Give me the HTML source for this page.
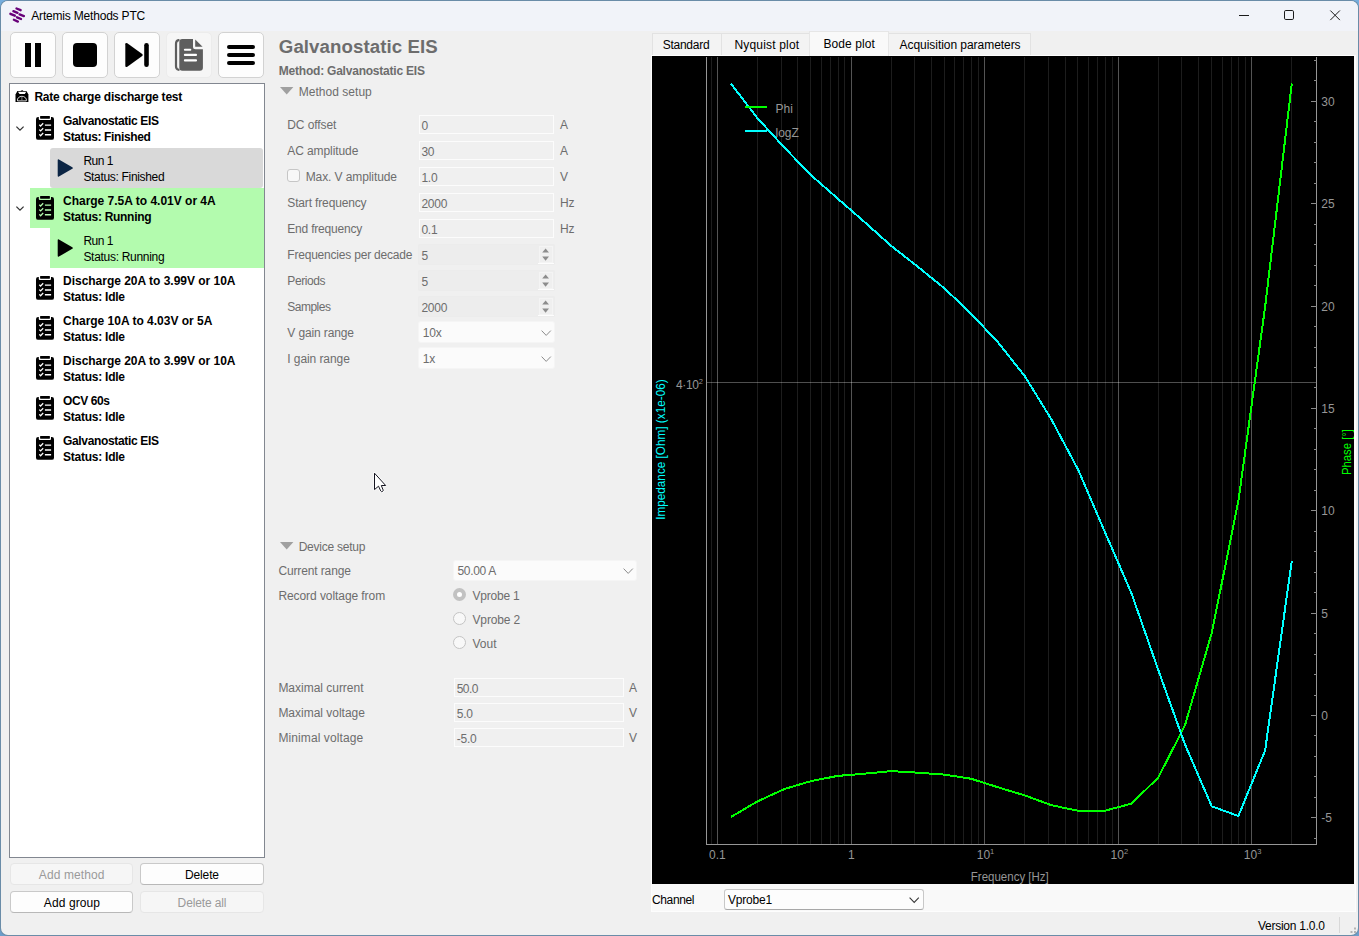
<!DOCTYPE html><html><head><meta charset="utf-8"><title>Artemis Methods PTC</title><style>

html,body{margin:0;padding:0}
body{width:1359px;height:936px;overflow:hidden;background:#6c9dca;position:relative;font-family:"Liberation Sans",sans-serif;font-size:12px;}
#bgt{position:absolute;left:0;top:0;width:1359px;height:40px;background:#76addd}
#win{position:absolute;left:1px;top:1px;width:1357px;height:934px;background:#f0f0f0;border-radius:7px;box-shadow:0 0 0 1px #6a8ca8;overflow:hidden}
#page{position:absolute;left:0;top:0;width:1359px;height:936px}
#tb{position:absolute;left:1px;top:1px;width:1357px;height:30px;background:#f1f3f9;border-radius:7px 7px 0 0}
.t{position:absolute;white-space:pre;color:#000}
.ab{position:absolute;box-sizing:border-box}
.ic,.plot{position:absolute;display:block}
.tbtn{position:absolute;box-sizing:border-box;width:46px;height:46px;top:32px;border:1px solid #d2d2d2;border-radius:5px;background:#fdfdfd}
.inp{position:absolute;box-sizing:border-box;border:1px solid #fcfcfc;background:#f0f0f0}
.spin{position:absolute;box-sizing:border-box;border:1px solid #ececec;background:#ededed;border-radius:2px}
.cmb{position:absolute;box-sizing:border-box;border:none;background:#fbfbfb;border-radius:2px;box-shadow:0 0 0 1px rgba(255,255,255,0.35)}
.btn{position:absolute;box-sizing:border-box;border:1px solid #c9c9c9;border-bottom-color:#b8b8b8;border-radius:4px;background:#fdfdfd}
.btn.dis{border-color:#e6e6e6;background:#f6f6f6}
.rad{position:absolute;box-sizing:border-box;width:13px;height:13px;border-radius:50%;border:1px solid #c4c4c4;background:#f8f8f8}
.tab{position:absolute;box-sizing:border-box;border:1px solid #e2e2e2;border-bottom:none;background:#f3f3f3;top:33px;height:22px}

</style></head><body><div id="bgt"></div><div id="win"></div><div id="page">
<div id="tb"></div>
<svg class="ic" width="30" height="30" viewBox="0 0 30 30" style="left:0px;top:0px"><g fill="none" stroke="#680079" stroke-width="2.35" stroke-linecap="round"><path d="M16.5,8.5l4.1,1.7"/><path d="M13.4,11.1l4.1,1.7"/><path d="M10.4,13.8l4.4,1.9"/><path d="M19.6,14.4l4.3,1.7"/><path d="M17,17.3l4,1.7"/><path d="M13.9,19.8l4,1.8"/></g></svg>
<svg class="ic" width="120" height="30" viewBox="0 0 120 30" style="left:1230px;top:1px"><g stroke="#1a1a1a" stroke-width="1" fill="none"><path d="M9,14.5h10"/><rect x="54.5" y="9.5" width="9" height="9" rx="1.3"/><path d="M100.3,9.5l9.6,9.6M109.9,9.5l-9.6,9.6"/></g></svg>
<div class="tbtn" style="left:10px"></div>
<div class="tbtn" style="left:62px"></div>
<div class="tbtn" style="left:114px"></div>
<div class="tbtn" style="left:166px;border-color:#ececec;background:#f6f6f6"></div>
<div class="tbtn" style="left:218px"></div>
<svg class="ic" width="260" height="46" viewBox="0 0 260 46" style="left:10px;top:32px"><rect x="15" y="11" width="6" height="24" fill="#000"/><rect x="25" y="11" width="6" height="24" fill="#000"/><rect x="63" y="11" width="24" height="24" rx="4" fill="#000"/><path d="M117.3,11.3L132.2,22q1.2,1 0,2L117.3,34.7q-2,1.2 -2,-1V12.3q0,-2.2 2,-1z" fill="#000"/><rect x="134.2" y="11" width="4.6" height="24" rx="2.3" fill="#000"/><path d="M168.6,8.1q-2.6,0.6 -2.6,3.6V34.2q0,3 2.6,3.6" stroke="#5e5e5e" stroke-width="2.2" fill="none" stroke-linecap="round"/><path d="M172.3,7.1h10.7v7.6q0,2.5 2.5,2.5h7.4v18.6q0,3 -3,3h-17.6q-3,0 -3,-3V10.1q0,-3 3,-3z" fill="#5e5e5e"/><path d="M185.2,7.4l7.4,7.3h-7.4z" fill="#5e5e5e"/><path d="M174.9,17.7h5.4M174.9,22.9h11.1M174.9,28.4h11.1" stroke="#fff" stroke-width="2.1" stroke-linecap="round" fill="none"/><path d="M219,15h24M219,23h24M219,31h24" stroke="#000" stroke-width="4" stroke-linecap="round" fill="none"/></svg>
<div class="ab" style="left:9px;top:83px;width:256px;height:775px;border:1px solid #828790;background:#fff"></div>
<div class="ab" style="left:50px;top:148px;width:213px;height:40px;background:#d9d9d9;border-radius:3px"></div>
<div class="ab" style="left:30px;top:188px;width:234px;height:40px;background:#b3fbae"></div>
<div class="ab" style="left:50px;top:228px;width:214px;height:40px;background:#b3fbae"></div>
<svg class="ic" width="14" height="13" viewBox="0 0 14 13" style="left:15px;top:90px"><path d="M2.4,1h9l2,3.4V12.1H0.5V4.4z" fill="#000"/><path d="M2.9,1.8h8.4l-1.5,2.2H4.6z" fill="#fff"/><path d="M2.5,10.9q-0.5,-1.9 1,-3.3q1.4,-1.3 3.4,-1.3q2,0 3.4,1.3q1.5,1.4 1,3.3z" fill="none" stroke="#f0f0f0" stroke-width="0.9"/><path d="M6.9,6.6v4" stroke="#999" stroke-width="0.8"/><path d="M5.9,0.6l1.1,0.5l1,-1" stroke="#000" stroke-width="0.8" fill="none"/></svg>
<svg class="ic" width="18" height="24" viewBox="0 0 18 24" style="left:36px;top:116px"><rect x="0" y="1.05" width="18" height="22.8" rx="2.2" fill="#000"/><path d="M2.8,0.9V3q0,1.1 1.1,1.1h10q1.1,0 1.1,-1.1V0.9z" fill="#fff"/><path d="M4.9,-0.1h8.2q0.8,0 0.8,0.8V1.9q0,0.9 -0.9,0.9H5q-0.9,0 -0.9,-0.9V0.7q0,-0.8 0.8,-0.8z" fill="#000"/><path d="M3.3,8.7l1.3,1.3l2.6,-2.7M3.3,13.6l1.3,1.3l2.6,-2.7M3.3,18.4l1.3,1.3l2.6,-2.7" stroke="#fff" stroke-width="1.3" fill="none"/><path d="M8.9,9.1h6.2M8.9,14h6.2M8.9,18.7h6.2" stroke="#fff" stroke-width="1.4" fill="none"/></svg>
<svg class="ic" width="18" height="24" viewBox="0 0 18 24" style="left:36px;top:196px"><rect x="0" y="1.05" width="18" height="22.8" rx="2.2" fill="#000"/><path d="M2.8,0.9V3q0,1.1 1.1,1.1h10q1.1,0 1.1,-1.1V0.9z" fill="#b3fbae"/><path d="M4.9,-0.1h8.2q0.8,0 0.8,0.8V1.9q0,0.9 -0.9,0.9H5q-0.9,0 -0.9,-0.9V0.7q0,-0.8 0.8,-0.8z" fill="#000"/><path d="M3.3,8.7l1.3,1.3l2.6,-2.7M3.3,13.6l1.3,1.3l2.6,-2.7M3.3,18.4l1.3,1.3l2.6,-2.7" stroke="#b3fbae" stroke-width="1.3" fill="none"/><path d="M8.9,9.1h6.2M8.9,14h6.2M8.9,18.7h6.2" stroke="#b3fbae" stroke-width="1.4" fill="none"/></svg>
<svg class="ic" width="18" height="24" viewBox="0 0 18 24" style="left:36px;top:276px"><rect x="0" y="1.05" width="18" height="22.8" rx="2.2" fill="#000"/><path d="M2.8,0.9V3q0,1.1 1.1,1.1h10q1.1,0 1.1,-1.1V0.9z" fill="#fff"/><path d="M4.9,-0.1h8.2q0.8,0 0.8,0.8V1.9q0,0.9 -0.9,0.9H5q-0.9,0 -0.9,-0.9V0.7q0,-0.8 0.8,-0.8z" fill="#000"/><path d="M3.3,8.7l1.3,1.3l2.6,-2.7M3.3,13.6l1.3,1.3l2.6,-2.7M3.3,18.4l1.3,1.3l2.6,-2.7" stroke="#fff" stroke-width="1.3" fill="none"/><path d="M8.9,9.1h6.2M8.9,14h6.2M8.9,18.7h6.2" stroke="#fff" stroke-width="1.4" fill="none"/></svg>
<svg class="ic" width="18" height="24" viewBox="0 0 18 24" style="left:36px;top:316px"><rect x="0" y="1.05" width="18" height="22.8" rx="2.2" fill="#000"/><path d="M2.8,0.9V3q0,1.1 1.1,1.1h10q1.1,0 1.1,-1.1V0.9z" fill="#fff"/><path d="M4.9,-0.1h8.2q0.8,0 0.8,0.8V1.9q0,0.9 -0.9,0.9H5q-0.9,0 -0.9,-0.9V0.7q0,-0.8 0.8,-0.8z" fill="#000"/><path d="M3.3,8.7l1.3,1.3l2.6,-2.7M3.3,13.6l1.3,1.3l2.6,-2.7M3.3,18.4l1.3,1.3l2.6,-2.7" stroke="#fff" stroke-width="1.3" fill="none"/><path d="M8.9,9.1h6.2M8.9,14h6.2M8.9,18.7h6.2" stroke="#fff" stroke-width="1.4" fill="none"/></svg>
<svg class="ic" width="18" height="24" viewBox="0 0 18 24" style="left:36px;top:356px"><rect x="0" y="1.05" width="18" height="22.8" rx="2.2" fill="#000"/><path d="M2.8,0.9V3q0,1.1 1.1,1.1h10q1.1,0 1.1,-1.1V0.9z" fill="#fff"/><path d="M4.9,-0.1h8.2q0.8,0 0.8,0.8V1.9q0,0.9 -0.9,0.9H5q-0.9,0 -0.9,-0.9V0.7q0,-0.8 0.8,-0.8z" fill="#000"/><path d="M3.3,8.7l1.3,1.3l2.6,-2.7M3.3,13.6l1.3,1.3l2.6,-2.7M3.3,18.4l1.3,1.3l2.6,-2.7" stroke="#fff" stroke-width="1.3" fill="none"/><path d="M8.9,9.1h6.2M8.9,14h6.2M8.9,18.7h6.2" stroke="#fff" stroke-width="1.4" fill="none"/></svg>
<svg class="ic" width="18" height="24" viewBox="0 0 18 24" style="left:36px;top:396px"><rect x="0" y="1.05" width="18" height="22.8" rx="2.2" fill="#000"/><path d="M2.8,0.9V3q0,1.1 1.1,1.1h10q1.1,0 1.1,-1.1V0.9z" fill="#fff"/><path d="M4.9,-0.1h8.2q0.8,0 0.8,0.8V1.9q0,0.9 -0.9,0.9H5q-0.9,0 -0.9,-0.9V0.7q0,-0.8 0.8,-0.8z" fill="#000"/><path d="M3.3,8.7l1.3,1.3l2.6,-2.7M3.3,13.6l1.3,1.3l2.6,-2.7M3.3,18.4l1.3,1.3l2.6,-2.7" stroke="#fff" stroke-width="1.3" fill="none"/><path d="M8.9,9.1h6.2M8.9,14h6.2M8.9,18.7h6.2" stroke="#fff" stroke-width="1.4" fill="none"/></svg>
<svg class="ic" width="18" height="24" viewBox="0 0 18 24" style="left:36px;top:436px"><rect x="0" y="1.05" width="18" height="22.8" rx="2.2" fill="#000"/><path d="M2.8,0.9V3q0,1.1 1.1,1.1h10q1.1,0 1.1,-1.1V0.9z" fill="#fff"/><path d="M4.9,-0.1h8.2q0.8,0 0.8,0.8V1.9q0,0.9 -0.9,0.9H5q-0.9,0 -0.9,-0.9V0.7q0,-0.8 0.8,-0.8z" fill="#000"/><path d="M3.3,8.7l1.3,1.3l2.6,-2.7M3.3,13.6l1.3,1.3l2.6,-2.7M3.3,18.4l1.3,1.3l2.6,-2.7" stroke="#fff" stroke-width="1.3" fill="none"/><path d="M8.9,9.1h6.2M8.9,14h6.2M8.9,18.7h6.2" stroke="#fff" stroke-width="1.4" fill="none"/></svg>
<svg class="ic" width="16" height="18" viewBox="0 0 16 18" style="left:57px;top:159px"><path d="M1.9,0.4L15.3,8.2q1.2,0.8 0,1.6L1.9,17.6q-1.2,0.6 -1.2,-0.8V1.2q0,-1.4 1.2,-0.8z" fill="#0b2544"/></svg>
<svg class="ic" width="16" height="18" viewBox="0 0 16 18" style="left:57px;top:239px"><path d="M1.9,0.4L15.3,8.2q1.2,0.8 0,1.6L1.9,17.6q-1.2,0.6 -1.2,-0.8V1.2q0,-1.4 1.2,-0.8z" fill="#000"/></svg>
<svg class="ic" width="10" height="7" viewBox="0 0 10 7" style="left:15px;top:125px"><path d="M1.4,1.6L5,5.1L8.6,1.6" stroke="#333" stroke-width="1.25" fill="none"/></svg>
<svg class="ic" width="10" height="7" viewBox="0 0 10 7" style="left:15px;top:205px"><path d="M1.4,1.6L5,5.1L8.6,1.6" stroke="#333" stroke-width="1.25" fill="none"/></svg>
<div class="btn dis" style="left:10px;top:863px;width:123px;height:22px"></div>
<div class="btn" style="left:140px;top:863px;width:124px;height:22px"></div>
<div class="btn" style="left:10px;top:891px;width:123px;height:22px"></div>
<div class="btn dis" style="left:140px;top:891px;width:124px;height:22px"></div>
<svg class="ic" width="14" height="8" viewBox="0 0 14 8" style="left:280px;top:87px"><path d="M0,0h13.4l-6.7,7.6z" fill="#a0a0a0"/></svg>
<svg class="ic" width="14" height="8" viewBox="0 0 14 8" style="left:280px;top:542px"><path d="M0,0h13.4l-6.7,7.6z" fill="#a0a0a0"/></svg>
<div class="inp" style="left:419px;top:115px;width:135px;height:19px"></div>
<div class="inp" style="left:419px;top:141px;width:135px;height:19px"></div>
<div class="inp" style="left:419px;top:167px;width:135px;height:19px"></div>
<div class="inp" style="left:419px;top:193px;width:135px;height:19px"></div>
<div class="inp" style="left:419px;top:219px;width:135px;height:19px"></div>
<div class="spin" style="left:418px;top:244px;width:137px;height:21px"></div>
<div class="ab" style="left:539px;top:246px;width:14px;height:17px;border:1px solid #f4f4f4;background:#efefef"></div>
<div class="ab" style="left:538px;top:263px;width:16px;height:1px;background:#fdfdfd"></div>
<svg class="ic" width="8" height="14" viewBox="0 0 8 14" style="left:542px;top:248px"><path d="M0.2,4.6L3.6,0.5L7,4.6zM0.2,8.6h6.8L3.6,12.7z" fill="#8c8c8c"/></svg>
<div class="spin" style="left:418px;top:270px;width:137px;height:21px"></div>
<div class="ab" style="left:539px;top:272px;width:14px;height:17px;border:1px solid #f4f4f4;background:#efefef"></div>
<div class="ab" style="left:538px;top:289px;width:16px;height:1px;background:#fdfdfd"></div>
<svg class="ic" width="8" height="14" viewBox="0 0 8 14" style="left:542px;top:274px"><path d="M0.2,4.6L3.6,0.5L7,4.6zM0.2,8.6h6.8L3.6,12.7z" fill="#8c8c8c"/></svg>
<div class="spin" style="left:418px;top:296px;width:137px;height:21px"></div>
<div class="ab" style="left:539px;top:298px;width:14px;height:17px;border:1px solid #f4f4f4;background:#efefef"></div>
<div class="ab" style="left:538px;top:315px;width:16px;height:1px;background:#fdfdfd"></div>
<svg class="ic" width="8" height="14" viewBox="0 0 8 14" style="left:542px;top:300px"><path d="M0.2,4.6L3.6,0.5L7,4.6zM0.2,8.6h6.8L3.6,12.7z" fill="#8c8c8c"/></svg>
<div class="cmb" style="left:419px;top:322px;width:135px;height:20px"></div>
<svg class="ic" width="11" height="7" viewBox="0 0 11 7" style="left:540.5px;top:330px"><path d="M0.6,0.6L5.2,5.4L9.8,0.6" stroke="#8a8a8a" stroke-width="1" fill="none"/></svg>
<div class="cmb" style="left:419px;top:348px;width:135px;height:20px"></div>
<svg class="ic" width="11" height="7" viewBox="0 0 11 7" style="left:540.5px;top:356px"><path d="M0.6,0.6L5.2,5.4L9.8,0.6" stroke="#8a8a8a" stroke-width="1" fill="none"/></svg>
<div class="ab" style="left:287px;top:169px;width:13px;height:13px;border:1px solid #c6c6c6;border-radius:3px;background:#f8f8f8"></div>
<div class="cmb" style="left:454px;top:561px;width:182px;height:19px"></div>
<svg class="ic" width="11" height="7" viewBox="0 0 11 7" style="left:622.5px;top:568px"><path d="M0.6,0.6L5.2,5.4L9.8,0.6" stroke="#8a8a8a" stroke-width="1" fill="none"/></svg>
<div class="rad" style="left:453px;top:588px;border:4px solid #c2c2c2;background:#fff"></div>
<div class="rad" style="left:453px;top:612px"></div>
<div class="rad" style="left:453px;top:636px"></div>
<div class="inp" style="left:454px;top:678px;width:170px;height:19px"></div>
<div class="inp" style="left:454px;top:703px;width:170px;height:19px"></div>
<div class="inp" style="left:454px;top:728px;width:170px;height:19px"></div>
<svg class="ic" width="14" height="21" viewBox="0 0 14 21" style="left:373px;top:472px"><path d="M1.5,1.2V17.6L5.5,14.2L7.7,18.9Q8.3,20 9.4,19.5Q10.5,19 10.1,17.9L8.3,13.5H12.7z" fill="#fff" stroke="#fff" stroke-opacity="0.7" stroke-width="2.6" stroke-linejoin="round"/><path d="M1.5,1.2V17.6L5.5,14.2L7.7,18.9Q8.3,20 9.4,19.5Q10.5,19 10.1,17.9L8.3,13.5H12.7z" fill="#fff" stroke="#14141f" stroke-width="1" stroke-linejoin="round"/></svg>
<div class="ab" style="left:651px;top:55px;width:705px;height:857px;background:#f9f9f9;border:1px solid #fdfdfd"></div>
<div class="tab" style="left:652px;width:70px"></div>
<div class="tab" style="left:721px;width:89px"></div>
<div class="tab" style="left:888px;width:143px"></div>
<div class="tab" style="left:809px;width:80px;top:31px;height:25px;background:#f9f9f9;border-color:#e6e6e6"></div>
<svg class="plot" width="702" height="828" viewBox="0 0 702 828" style="left:652px;top:56px">
<rect width="702" height="828" fill="#000"/>
<path d="M59.5,1.0V788.5 M105.5,1.0V788.5 M129.5,1.0V788.5 M145.5,1.0V788.5 M158.5,1.0V788.5 M169.5,1.0V788.5 M178.5,1.0V788.5 M186.5,1.0V788.5 M192.5,1.0V788.5 M239.5,1.0V788.5 M262.5,1.0V788.5 M279.5,1.0V788.5 M292.5,1.0V788.5 M302.5,1.0V788.5 M311.5,1.0V788.5 M319.5,1.0V788.5 M326.5,1.0V788.5 M372.5,1.0V788.5 M396.5,1.0V788.5 M413.5,1.0V788.5 M425.5,1.0V788.5 M436.5,1.0V788.5 M445.5,1.0V788.5 M453.5,1.0V788.5 M460.5,1.0V788.5 M506.5,1.0V788.5 M529.5,1.0V788.5 M546.5,1.0V788.5 M559.5,1.0V788.5 M570.5,1.0V788.5 M579.5,1.0V788.5 M586.5,1.0V788.5 M593.5,1.0V788.5 M639.5,1.0V788.5" stroke="#fff" stroke-opacity="0.115" stroke-width="1" fill="none" shape-rendering="crispEdges"/>
<path d="M65.5,1.0V788.5 M199.5,1.0V788.5 M332.5,1.0V788.5 M466.5,1.0V788.5 M599.5,1.0V788.5" stroke="#fff" stroke-opacity="0.33" stroke-width="1" fill="none" shape-rendering="crispEdges"/>
<path d="M54.5,326.5H664.5" stroke="#fff" stroke-opacity="0.31" stroke-width="1" fill="none" shape-rendering="crispEdges"/>
<path d="M54.5,1.0V788.5H664.5V1.0" stroke="#969696" stroke-width="1" fill="none" shape-rendering="crispEdges"/>
<path d="M661.5,782.5h3 M658.5,761.5h6 M661.5,741.5h3 M661.5,720.5h3 M661.5,700.5h3 M661.5,679.5h3 M658.5,659.5h6 M661.5,639.5h3 M661.5,618.5h3 M661.5,598.5h3 M661.5,577.5h3 M658.5,557.5h6 M661.5,536.5h3 M661.5,516.5h3 M661.5,495.5h3 M661.5,475.5h3 M658.5,454.5h6 M661.5,434.5h3 M661.5,413.5h3 M661.5,393.5h3 M661.5,372.5h3 M658.5,352.5h6 M661.5,331.5h3 M661.5,311.5h3 M661.5,291.5h3 M661.5,270.5h3 M658.5,250.5h6 M661.5,229.5h3 M661.5,209.5h3 M661.5,188.5h3 M661.5,168.5h3 M658.5,147.5h6 M661.5,127.5h3 M661.5,106.5h3 M661.5,86.5h3 M661.5,65.5h3 M658.5,45.5h6 M661.5,24.5h3 M661.5,4.5h3" stroke="#8a8a8a" stroke-width="1" fill="none" shape-rendering="crispEdges"/>
<polyline points="639.8,27.5 613.1,251.0 586.4,445.0 559.7,577.0 533.0,669.3 506.2,721.6 479.5,747.6 452.8,754.8 426.1,754.8 399.4,749.2 372.7,739.4 346.0,731.3 319.3,722.8 292.6,718.6 265.9,716.7 239.1,715.1 212.4,717.7 185.7,719.9 159.0,725.1 132.3,733.1 105.6,745.3 78.9,761.0" stroke="#00ff00" stroke-width="2" fill="none" stroke-linejoin="round" shape-rendering="crispEdges"/>
<polyline points="639.8,504.8 613.1,694.5 586.4,760.0 559.7,750.3 533.0,688.5 506.2,613.8 479.5,537.3 452.8,475.8 426.1,413.6 399.4,363.4 372.7,320.0 346.0,286.4 319.3,257.9 292.6,232.5 265.9,210.8 239.1,189.8 212.4,165.9 185.7,142.6 159.0,119.2 132.3,91.5 105.6,62.3 78.9,27.6" stroke="#00ffff" stroke-width="2" fill="none" stroke-linejoin="round" shape-rendering="crispEdges"/>
<path d="M93,51h22" stroke="#00ff00" stroke-width="2"/>
<path d="M93,75h22" stroke="#00ffff" stroke-width="2"/>
<g font-family='"Liberation Sans", sans-serif'>
<text x="123.5" y="56.7" text-anchor="start" fill="#969696" font-size="12" >Phi</text>
<text x="123.5" y="80.7" text-anchor="start" fill="#969696" font-size="12" >logZ</text>
<text x="65.3" y="803.0" text-anchor="middle" fill="#969696" font-size="12" >0.1</text>
<text x="199.3" y="803.0" text-anchor="middle" fill="#969696" font-size="12" >1</text>
<text x="333.5" y="803.0" text-anchor="middle" fill="#969696" font-size="12">10<tspan dy="-5" font-size="7.5">1</tspan></text>
<text x="467.3" y="803.0" text-anchor="middle" fill="#969696" font-size="12">10<tspan dy="-5" font-size="7.5">2</tspan></text>
<text x="600.6" y="803.0" text-anchor="middle" fill="#969696" font-size="12">10<tspan dy="-5" font-size="7.5">3</tspan></text>
<text x="357.8" y="824.8" text-anchor="middle" fill="#969696" font-size="12" textLength="78" lengthAdjust="spacingAndGlyphs">Frequency [Hz]</text>
<text x="23.9" y="332.5" fill="#969696" font-size="12" letter-spacing="-0.3">4·10<tspan dy="-5" font-size="7.5">2</tspan></text>
<text x="669.3" y="766.2" text-anchor="start" fill="#969696" font-size="12" >-5</text>
<text x="669.3" y="663.9" text-anchor="start" fill="#969696" font-size="12" >0</text>
<text x="669.3" y="561.5" text-anchor="start" fill="#969696" font-size="12" >5</text>
<text x="669.3" y="459.2" text-anchor="start" fill="#969696" font-size="12" >10</text>
<text x="669.3" y="356.9" text-anchor="start" fill="#969696" font-size="12" >15</text>
<text x="669.3" y="254.5" text-anchor="start" fill="#969696" font-size="12" >20</text>
<text x="669.3" y="152.2" text-anchor="start" fill="#969696" font-size="12" >25</text>
<text x="669.3" y="49.8" text-anchor="start" fill="#969696" font-size="12" >30</text>
<text transform="translate(13.3,393.6) rotate(-90)" text-anchor="middle" fill="#00ffff" font-size="12" textLength="140.5" lengthAdjust="spacingAndGlyphs">Impedance [Ohm] (x1e-06)</text>
<text transform="translate(699.3,396.0) rotate(-90)" text-anchor="middle" fill="#00ff00" font-size="12" textLength="46" lengthAdjust="spacingAndGlyphs">Phase [°]</text>
</g></svg>
<div class="ab" style="left:724px;top:889px;width:200px;height:21px;border:1px solid #c8c8c8;border-bottom-color:#a8a8a8;border-radius:3px;background:#fdfdfd"></div>
<svg class="ic" width="11" height="7" viewBox="0 0 11 7" style="left:908.5px;top:897px"><path d="M0.6,0.6L5.2,5.4L9.8,0.6" stroke="#3a3a3a" stroke-width="1.1" fill="none"/></svg>
<div class="ab" style="left:1339px;top:917px;width:1px;height:16px;background:#d8d8d8"></div>
<svg class="ic" width="8" height="8" viewBox="0 0 8 8" style="left:1349px;top:926px"><path d="M5,5h2v2h-2zM5,1.5h2v2h-2zM1.5,5h2v2h-2z" fill="#b4b4b4"/></svg>
<span class="t" style="left:31.3px;top:8px;font-size:12px;line-height:16px;letter-spacing:-0.193px;">Artemis Methods PTC</span>
<span class="t" style="left:34.4px;top:89px;font-size:12px;line-height:16px;letter-spacing:-0.220px;font-weight:700;">Rate charge discharge test</span>
<span class="t" style="left:63.0px;top:113px;font-size:12px;line-height:16px;letter-spacing:-0.338px;font-weight:700;">Galvanostatic EIS</span>
<span class="t" style="left:63.0px;top:129px;font-size:12px;line-height:16px;letter-spacing:-0.371px;font-weight:700;">Status: Finished</span>
<span class="t" style="left:83.4px;top:153px;font-size:12px;line-height:16px;letter-spacing:-0.496px;">Run 1</span>
<span class="t" style="left:83.4px;top:169px;font-size:12px;line-height:16px;letter-spacing:-0.319px;">Status: Finished</span>
<span class="t" style="left:63.0px;top:193px;font-size:12px;line-height:16px;letter-spacing:-0.010px;font-weight:700;">Charge 7.5A to 4.01V or 4A</span>
<span class="t" style="left:63.0px;top:209px;font-size:12px;line-height:16px;letter-spacing:-0.294px;font-weight:700;">Status: Running</span>
<span class="t" style="left:83.4px;top:233px;font-size:12px;line-height:16px;letter-spacing:-0.496px;">Run 1</span>
<span class="t" style="left:83.4px;top:249px;font-size:12px;line-height:16px;letter-spacing:-0.296px;">Status: Running</span>
<span class="t" style="left:63.0px;top:273px;font-size:12px;line-height:16px;letter-spacing:-0.016px;font-weight:700;">Discharge 20A to 3.99V or 10A</span>
<span class="t" style="left:63.0px;top:289px;font-size:12px;line-height:16px;letter-spacing:-0.242px;font-weight:700;">Status: Idle</span>
<span class="t" style="left:63.0px;top:313px;font-size:12px;line-height:16px;letter-spacing:-0.009px;font-weight:700;">Charge 10A to 4.03V or 5A</span>
<span class="t" style="left:63.0px;top:329px;font-size:12px;line-height:16px;letter-spacing:-0.242px;font-weight:700;">Status: Idle</span>
<span class="t" style="left:63.0px;top:353px;font-size:12px;line-height:16px;letter-spacing:-0.016px;font-weight:700;">Discharge 20A to 3.99V or 10A</span>
<span class="t" style="left:63.0px;top:369px;font-size:12px;line-height:16px;letter-spacing:-0.242px;font-weight:700;">Status: Idle</span>
<span class="t" style="left:63.0px;top:393px;font-size:12px;line-height:16px;letter-spacing:-0.394px;font-weight:700;">OCV 60s</span>
<span class="t" style="left:63.0px;top:409px;font-size:12px;line-height:16px;letter-spacing:-0.242px;font-weight:700;">Status: Idle</span>
<span class="t" style="left:63.0px;top:433px;font-size:12px;line-height:16px;letter-spacing:-0.338px;font-weight:700;">Galvanostatic EIS</span>
<span class="t" style="left:63.0px;top:449px;font-size:12px;line-height:16px;letter-spacing:-0.242px;font-weight:700;">Status: Idle</span>
<span class="t" style="left:38.8px;top:867px;font-size:12px;line-height:16px;letter-spacing:0.114px;color:#9a9a9a;">Add method</span>
<span class="t" style="left:185.1px;top:867px;font-size:12px;line-height:16px;letter-spacing:-0.161px;">Delete</span>
<span class="t" style="left:43.8px;top:895px;font-size:12px;line-height:16px;letter-spacing:0.107px;">Add group</span>
<span class="t" style="left:177.6px;top:895px;font-size:12px;line-height:16px;letter-spacing:-0.130px;color:#9a9a9a;">Delete all</span>
<span class="t" style="left:278.8px;top:34px;font-size:18.67px;line-height:25px;letter-spacing:0.084px;font-weight:700;color:#6d6d6d;">Galvanostatic EIS</span>
<span class="t" style="left:278.8px;top:63px;font-size:12px;line-height:16px;letter-spacing:-0.219px;font-weight:700;color:#6d6d6d;">Method: Galvanostatic EIS</span>
<span class="t" style="left:298.7px;top:84px;font-size:12px;line-height:16px;letter-spacing:0.033px;color:#6d6d6d;">Method setup</span>
<span class="t" style="left:287.3px;top:117px;font-size:12px;line-height:16px;letter-spacing:-0.096px;color:#6d6d6d;">DC offset</span>
<span class="t" style="left:287.3px;top:143px;font-size:12px;line-height:16px;letter-spacing:-0.091px;color:#6d6d6d;">AC amplitude</span>
<span class="t" style="left:305.7px;top:169px;font-size:12px;line-height:16px;letter-spacing:-0.092px;color:#6d6d6d;">Max. V amplitude</span>
<span class="t" style="left:287.3px;top:195px;font-size:12px;line-height:16px;letter-spacing:-0.150px;color:#6d6d6d;">Start frequency</span>
<span class="t" style="left:287.3px;top:221px;font-size:12px;line-height:16px;letter-spacing:-0.207px;color:#6d6d6d;">End frequency</span>
<span class="t" style="left:287.3px;top:247px;font-size:12px;line-height:16px;letter-spacing:-0.206px;color:#6d6d6d;">Frequencies per decade</span>
<span class="t" style="left:287.3px;top:273px;font-size:12px;line-height:16px;letter-spacing:-0.398px;color:#6d6d6d;">Periods</span>
<span class="t" style="left:287.3px;top:299px;font-size:12px;line-height:16px;letter-spacing:-0.506px;color:#6d6d6d;">Samples</span>
<span class="t" style="left:287.3px;top:325px;font-size:12px;line-height:16px;letter-spacing:-0.127px;color:#6d6d6d;">V gain range</span>
<span class="t" style="left:287.3px;top:351px;font-size:12px;line-height:16px;letter-spacing:-0.077px;color:#6d6d6d;">I gain range</span>
<span class="t" style="left:421.4px;top:118px;font-size:12px;line-height:16px;color:#6d6d6d;">0</span>
<span class="t" style="left:421.4px;top:144px;font-size:12px;line-height:16px;letter-spacing:-0.2px;color:#6d6d6d;">30</span>
<span class="t" style="left:421.4px;top:170px;font-size:12px;line-height:16px;letter-spacing:-0.2px;color:#6d6d6d;">1.0</span>
<span class="t" style="left:421.4px;top:196px;font-size:12px;line-height:16px;letter-spacing:-0.2px;color:#6d6d6d;">2000</span>
<span class="t" style="left:421.4px;top:222px;font-size:12px;line-height:16px;letter-spacing:-0.2px;color:#6d6d6d;">0.1</span>
<span class="t" style="left:421.4px;top:248px;font-size:12px;line-height:16px;color:#6d6d6d;">5</span>
<span class="t" style="left:421.4px;top:274px;font-size:12px;line-height:16px;color:#6d6d6d;">5</span>
<span class="t" style="left:421.4px;top:300px;font-size:12px;line-height:16px;letter-spacing:-0.2px;color:#6d6d6d;">2000</span>
<span class="t" style="left:560.0px;top:117px;font-size:12px;line-height:16px;color:#6d6d6d;">A</span>
<span class="t" style="left:560.0px;top:143px;font-size:12px;line-height:16px;color:#6d6d6d;">A</span>
<span class="t" style="left:560.0px;top:169px;font-size:12px;line-height:16px;color:#6d6d6d;">V</span>
<span class="t" style="left:560.0px;top:195px;font-size:12px;line-height:16px;letter-spacing:-0.2px;color:#6d6d6d;">Hz</span>
<span class="t" style="left:560.0px;top:221px;font-size:12px;line-height:16px;letter-spacing:-0.2px;color:#6d6d6d;">Hz</span>
<span class="t" style="left:422.7px;top:325px;font-size:12px;line-height:16px;letter-spacing:-0.2px;color:#6d6d6d;">10x</span>
<span class="t" style="left:422.7px;top:351px;font-size:12px;line-height:16px;letter-spacing:-0.2px;color:#6d6d6d;">1x</span>
<span class="t" style="left:298.7px;top:539px;font-size:12px;line-height:16px;letter-spacing:-0.250px;color:#6d6d6d;">Device setup</span>
<span class="t" style="left:278.4px;top:563px;font-size:12px;line-height:16px;letter-spacing:-0.124px;color:#6d6d6d;">Current range</span>
<span class="t" style="left:278.4px;top:588px;font-size:12px;line-height:16px;letter-spacing:-0.073px;color:#6d6d6d;">Record voltage from</span>
<span class="t" style="left:457.5px;top:563px;font-size:12px;line-height:16px;letter-spacing:-0.341px;color:#6d6d6d;">50.00 A</span>
<span class="t" style="left:472.5px;top:588px;font-size:12px;line-height:16px;letter-spacing:-0.227px;color:#6d6d6d;">Vprobe 1</span>
<span class="t" style="left:472.5px;top:612px;font-size:12px;line-height:16px;letter-spacing:-0.147px;color:#6d6d6d;">Vprobe 2</span>
<span class="t" style="left:472.5px;top:636px;font-size:12px;line-height:16px;letter-spacing:0.020px;color:#6d6d6d;">Vout</span>
<span class="t" style="left:278.4px;top:680px;font-size:12px;line-height:16px;letter-spacing:-0.018px;color:#6d6d6d;">Maximal current</span>
<span class="t" style="left:278.4px;top:705px;font-size:12px;line-height:16px;letter-spacing:-0.014px;color:#6d6d6d;">Maximal voltage</span>
<span class="t" style="left:278.4px;top:730px;font-size:12px;line-height:16px;letter-spacing:0.098px;color:#6d6d6d;">Minimal voltage</span>
<span class="t" style="left:456.7px;top:681px;font-size:12px;line-height:16px;letter-spacing:-0.560px;color:#6d6d6d;">50.0</span>
<span class="t" style="left:456.7px;top:706px;font-size:12px;line-height:16px;letter-spacing:-0.2px;color:#6d6d6d;">5.0</span>
<span class="t" style="left:456.7px;top:731px;font-size:12px;line-height:16px;letter-spacing:-0.2px;color:#6d6d6d;">-5.0</span>
<span class="t" style="left:629.0px;top:680px;font-size:12px;line-height:16px;color:#6d6d6d;">A</span>
<span class="t" style="left:629.0px;top:705px;font-size:12px;line-height:16px;color:#6d6d6d;">V</span>
<span class="t" style="left:629.0px;top:730px;font-size:12px;line-height:16px;color:#6d6d6d;">V</span>
<span class="t" style="left:662.7px;top:37px;font-size:12px;line-height:16px;letter-spacing:-0.254px;">Standard</span>
<span class="t" style="left:734.5px;top:37px;font-size:12px;line-height:16px;letter-spacing:0.174px;">Nyquist plot</span>
<span class="t" style="left:823.4px;top:36px;font-size:12px;line-height:16px;letter-spacing:0.092px;">Bode plot</span>
<span class="t" style="left:899.6px;top:37px;font-size:12px;line-height:16px;letter-spacing:-0.049px;">Acquisition parameters</span>
<span class="t" style="left:652.0px;top:892px;font-size:12px;line-height:16px;letter-spacing:-0.370px;">Channel</span>
<span class="t" style="left:728.0px;top:892px;font-size:12px;line-height:16px;letter-spacing:-0.212px;">Vprobe1</span>
<span class="t" style="left:1257.9px;top:918px;font-size:12px;line-height:16px;letter-spacing:-0.245px;">Version 1.0.0</span>
</div></body></html>
